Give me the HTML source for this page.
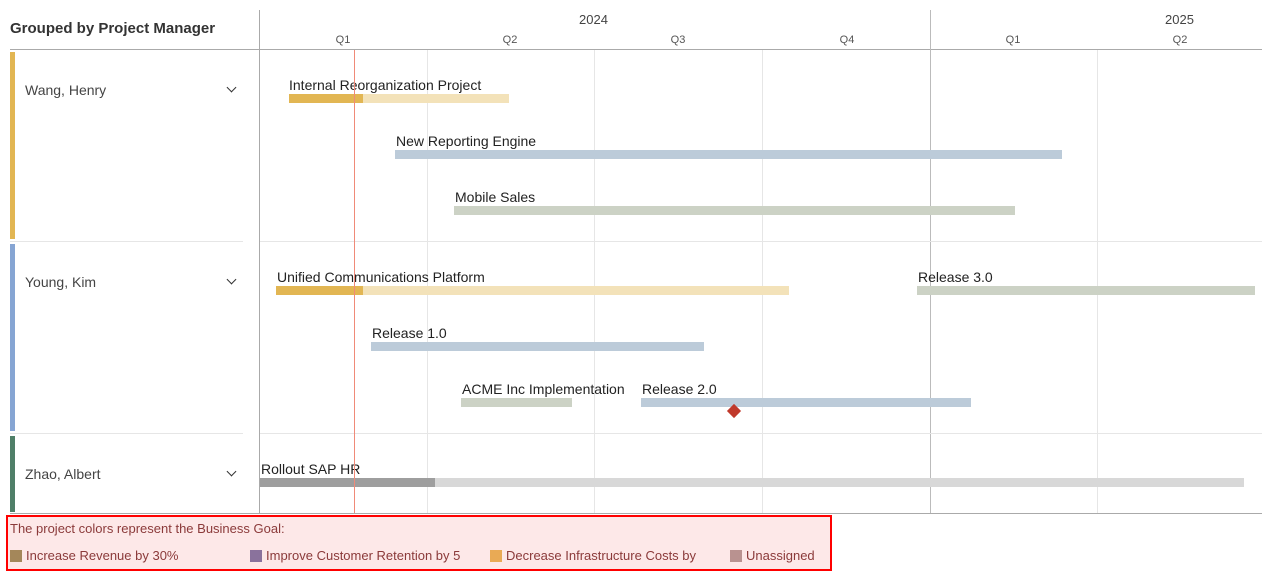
<!DOCTYPE html><html><head><style>
*{margin:0;padding:0;box-sizing:border-box}
body{width:1262px;height:571px;background:#fff;font-family:"Liberation Sans",sans-serif;position:relative;overflow:hidden;color:#222}
.a{position:absolute}
.vl{position:absolute;width:1px;background:#e6e6e6}
.bar{position:absolute;height:9px}
.lbl{position:absolute;font-size:14px;color:#222;white-space:nowrap}
.q{position:absolute;font-size:11px;color:#555;transform:translateX(-50%)}
.pm{position:absolute;left:25px;font-size:14px;color:#444}
.chev{position:absolute;left:228px;width:7px;height:7px;border-right:1.5px solid #333;border-bottom:1.5px solid #333;transform:rotate(45deg)}
.leg{position:absolute;top:548px;font-size:13px;color:#8b3a3a;white-space:nowrap}
.leg i{display:inline-block;width:12px;height:12px;vertical-align:-2px;margin-right:4px}
</style></head><body>
<div class="a" style="left:10px;top:20px;font-size:15px;font-weight:bold;color:#333">Grouped by Project Manager</div>
<div class="a" style="left:10px;top:49px;width:1252px;height:1px;background:#aaa"></div>
<div class="a" style="left:259px;top:10px;width:1px;height:503px;background:#aaa"></div>
<div class="a" style="left:930px;top:10px;width:1px;height:503px;background:#bbb"></div>
<div class="vl" style="left:427px;top:50px;height:463px"></div>
<div class="vl" style="left:594px;top:50px;height:463px"></div>
<div class="vl" style="left:762px;top:50px;height:463px"></div>
<div class="vl" style="left:1097px;top:50px;height:463px"></div>
<div class="a" style="left:10px;top:241px;width:233px;height:1px;background:#e6e6e6"></div>
<div class="a" style="left:260px;top:241px;width:1002px;height:1px;background:#e6e6e6"></div>
<div class="a" style="left:10px;top:433px;width:233px;height:1px;background:#e6e6e6"></div>
<div class="a" style="left:260px;top:433px;width:1002px;height:1px;background:#e6e6e6"></div>
<div class="a" style="left:10px;top:513px;width:1252px;height:1px;background:#aaa"></div>
<div class="a" style="left:579px;top:12px;font-size:13px;color:#444">2024</div>
<div class="a" style="left:1165px;top:12px;font-size:13px;color:#444">2025</div>
<div class="q" style="left:343px;top:34px">Q1</div><div class="q" style="left:510px;top:34px">Q2</div><div class="q" style="left:678px;top:34px">Q3</div><div class="q" style="left:847px;top:34px">Q4</div><div class="q" style="left:1013px;top:34px">Q1</div><div class="q" style="left:1180px;top:34px">Q2</div>
<div class="a" style="left:10px;top:52px;width:5px;height:187px;background:#e2b653"></div>
<div class="a" style="left:10px;top:244px;width:5px;height:187px;background:#86a5d3"></div>
<div class="a" style="left:10px;top:436px;width:5px;height:76px;background:#4f7f68"></div>
<div class="pm" style="top:82px">Wang, Henry</div><div class="chev" style="top:84px"></div>
<div class="pm" style="top:274px">Young, Kim</div><div class="chev" style="top:276px"></div>
<div class="pm" style="top:466px">Zhao, Albert</div><div class="chev" style="top:468px"></div>
<div class="bar" style="left:289px;top:94px;width:220px;background:#f3e2b9"></div><div class="bar" style="left:289px;top:94px;width:74px;background:#e2b653"></div>
<div class="lbl" style="left:289px;top:77px">Internal Reorganization Project</div>
<div class="bar" style="left:395px;top:150px;width:667px;background:#bccbd9"></div><div class="lbl" style="left:396px;top:133px">New Reporting Engine</div>
<div class="bar" style="left:454px;top:206px;width:561px;background:#ccd2c5"></div><div class="lbl" style="left:455px;top:189px">Mobile Sales</div>
<div class="bar" style="left:276px;top:286px;width:513px;background:#f3e2b9"></div><div class="bar" style="left:276px;top:286px;width:87px;background:#e2b653"></div>
<div class="lbl" style="left:277px;top:269px">Unified Communications Platform</div>
<div class="bar" style="left:917px;top:286px;width:338px;background:#ccd2c5"></div><div class="lbl" style="left:918px;top:269px">Release 3.0</div>
<div class="bar" style="left:371px;top:342px;width:333px;background:#bccbd9"></div><div class="lbl" style="left:372px;top:325px">Release 1.0</div>
<div class="bar" style="left:461px;top:398px;width:111px;background:#ccd2c5"></div><div class="lbl" style="left:462px;top:381px">ACME Inc Implementation</div>
<div class="bar" style="left:641px;top:398px;width:330px;background:#bccbd9"></div><div class="lbl" style="left:642px;top:381px">Release 2.0</div>
<div class="a" style="left:729px;top:406px;width:10px;height:10px;background:#c0392b;transform:rotate(45deg)"></div>
<div class="bar" style="left:260px;top:478px;width:984px;background:#d8d8d8"></div><div class="bar" style="left:260px;top:478px;width:175px;background:#9e9e9e"></div>
<div class="lbl" style="left:261px;top:461px">Rollout SAP HR</div>
<div class="a" style="left:354px;top:50px;width:1px;height:463px;background:#f08a78"></div>
<div class="a" style="left:6px;top:515px;width:826px;height:56px;border:2px solid #f00;background:#fde8e8"></div>
<div class="a" style="left:10px;top:521px;font-size:13px;color:#8b3a3a">The project colors represent the Business Goal:</div>
<div class="leg" style="left:10px"><i style="background:#a4875a"></i>Increase Revenue by 30%</div>
<div class="leg" style="left:250px"><i style="background:#8a729c"></i>Improve Customer Retention by 5</div>
<div class="leg" style="left:490px"><i style="background:#e9aa55"></i>Decrease Infrastructure Costs by</div>
<div class="leg" style="left:730px"><i style="background:#b99290"></i>Unassigned</div>
</body></html>
